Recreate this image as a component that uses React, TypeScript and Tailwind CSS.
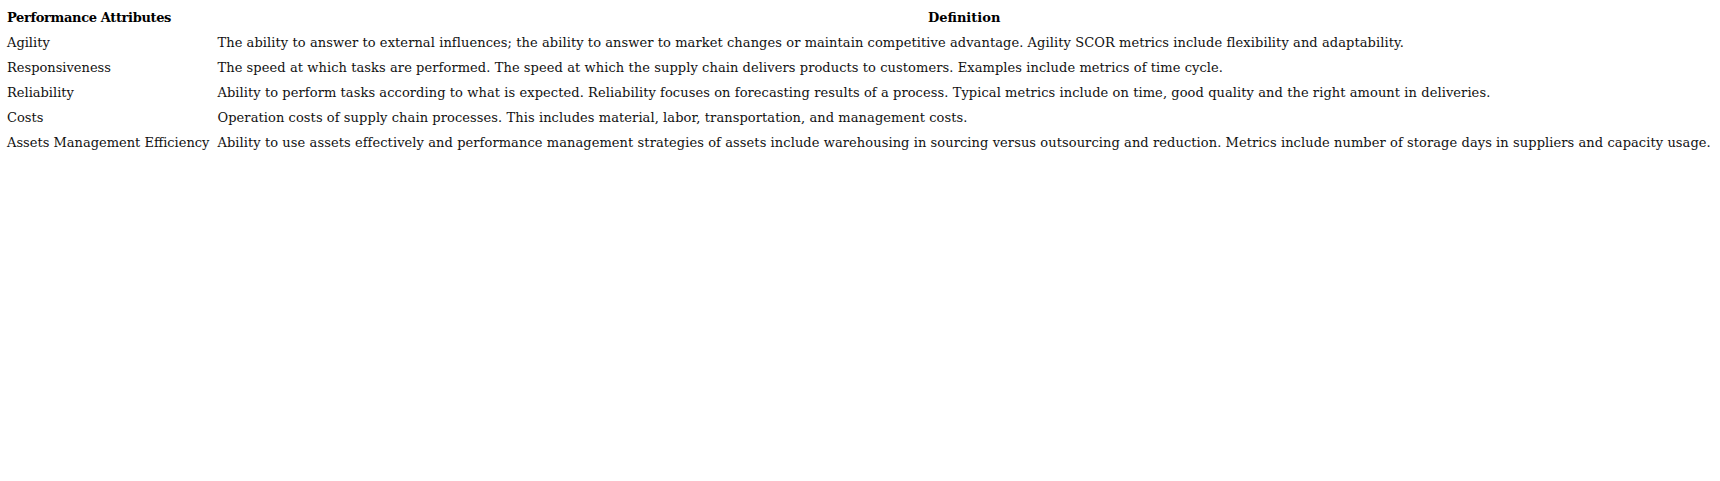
const rows: [string, string][] = [
  ['Agility', 'The ability to answer to external influences; the ability to answer to market changes or maintain competitive advantage. Agility SCOR metrics include flexibility and adaptability.'],
  ['Responsiveness', 'The speed at which tasks are performed. The speed at which the supply chain delivers products to customers. Examples include metrics of time cycle.'],
  ['Reliability', 'Ability to perform tasks according to what is expected. Reliability focuses on forecasting results of a process. Typical metrics include on time, good quality and the right amount in deliveries.'],
  ['Costs', 'Operation costs of supply chain processes. This includes material, labor, transportation, and management costs.'],
  ['Assets Management Efficiency', 'Ability to use assets effectively and performance management strategies of assets include warehousing in sourcing versus outsourcing and reduction. Metrics include number of storage days in suppliers and capacity usage.'],
]

export default function App() {
  return (
    <div className="w-[1720px] h-[481px] bg-white px-[3px] pt-[5px] text-[#111] font-['DejaVu_Serif',serif] text-[13px]">
      <table className="border-collapse">
        <thead>
          <tr>
            <th className="text-left font-bold px-[4px] h-[25px] whitespace-nowrap tracking-[-0.35px] text-black">Performance Attributes</th>
            <th className="text-center font-bold px-[4px] h-[25px] text-black">Definition</th>
          </tr>
        </thead>
        <tbody>
          {rows.map(([name, def]) => (
            <tr key={name}>
              <td className="px-[4px] h-[25px] whitespace-nowrap">{name}</td>
              <td className="px-[4px] h-[25px] whitespace-nowrap tracking-[0.08px]">{def}</td>
            </tr>
          ))}
        </tbody>
      </table>
    </div>
  )
}
